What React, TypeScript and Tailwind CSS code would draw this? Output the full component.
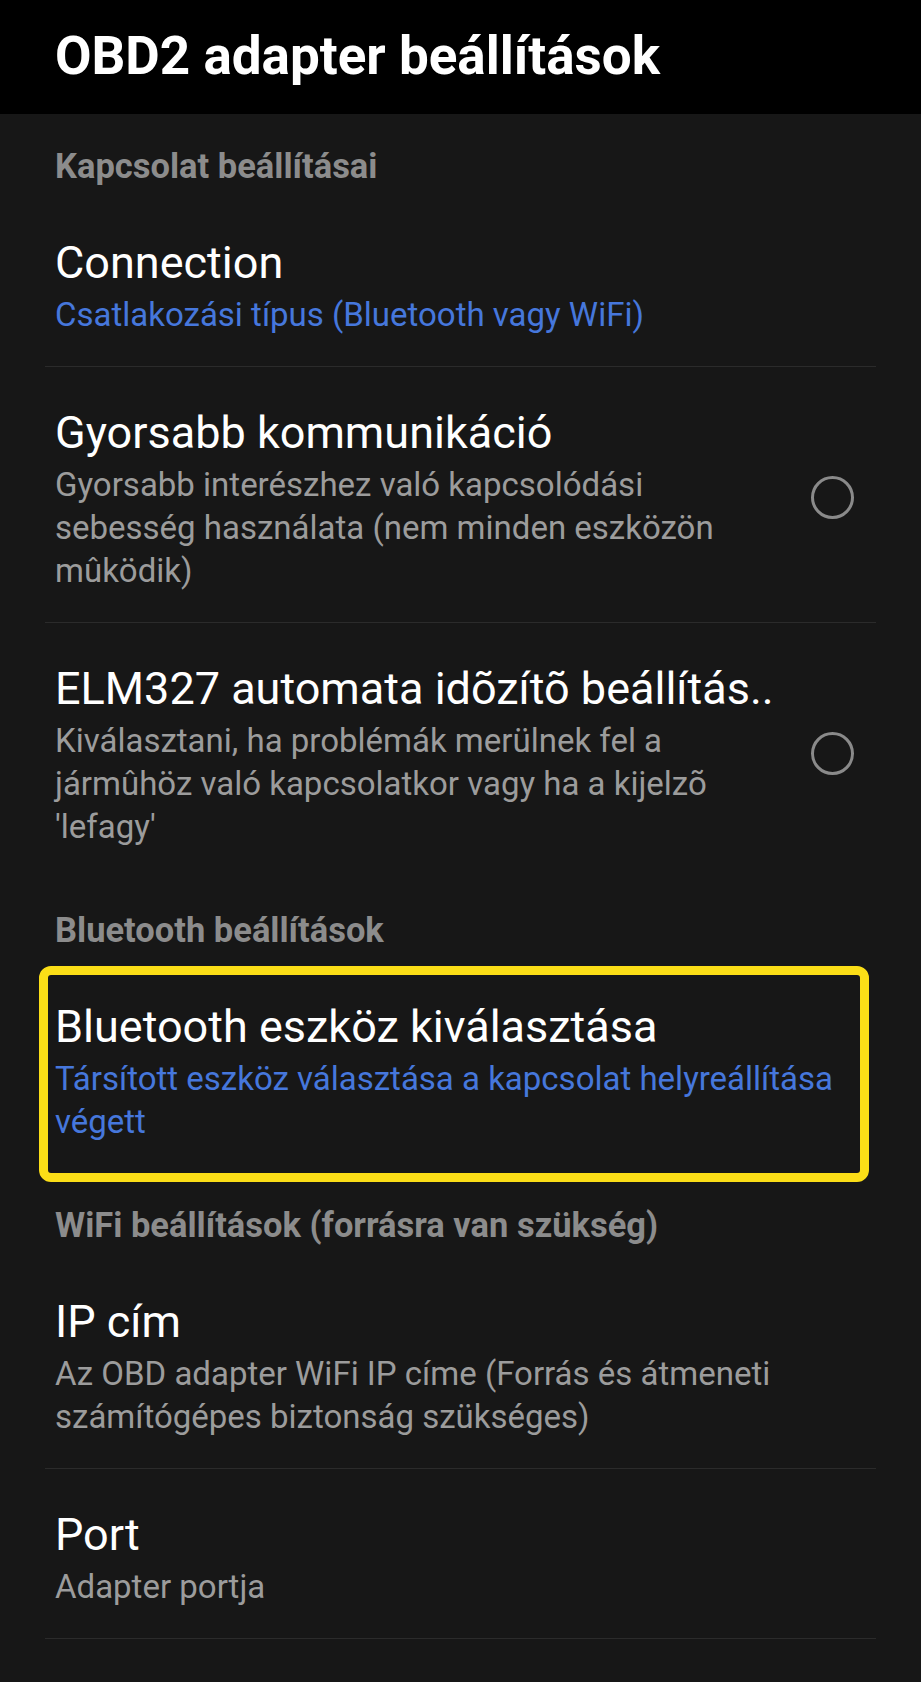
import React from "react";

type Pref = {
  title: string;
  summary: string;
  blue?: boolean;
  radio?: boolean;
  divider?: boolean;
  highlight?: boolean;
};

type Category = { title: string; items: Pref[] };

const categories: Category[] = [
  {
    title: "Kapcsolat beállításai",
    items: [
      { title: "Connection", summary: "Csatlakozási típus (Bluetooth vagy WiFi)", blue: true, divider: true },
      {
        title: "Gyorsabb kommunikáció",
        summary: "Gyorsabb interészhez való kapcsolódási sebesség használata (nem minden eszközön mûködik)",
        radio: true,
        divider: true,
      },
      {
        title: "ELM327 automata idõzítõ beállítás..",
        summary: "Kiválasztani, ha problémák merülnek fel a jármûhöz való kapcsolatkor vagy ha a kijelzõ 'lefagy'",
        radio: true,
      },
    ],
  },
  {
    title: "Bluetooth beállítások",
    items: [
      {
        title: "Bluetooth eszköz kiválasztása",
        summary: "Társított eszköz választása a kapcsolat helyreállítása végett",
        blue: true,
        highlight: true,
      },
    ],
  },
  {
    title: "WiFi beállítások (forrásra van szükség)",
    items: [
      {
        title: "IP cím",
        summary: "Az OBD adapter WiFi IP címe (Forrás és átmeneti számítógépes biztonság szükséges)",
        divider: true,
      },
      { title: "Port", summary: "Adapter portja", divider: true },
    ],
  },
];

function PrefRow({ pref }: { pref: Pref }) {
  return (
    <div className={pref.divider ? "relative border-b border-[#2b2b2b]" : "relative"}>
      {pref.highlight && (
        <div className="pointer-events-none absolute -left-[6px] right-[7px] top-[5px] bottom-[-9px] rounded-[12px] border-[9px] border-[#fbde17]" />
      )}
      <div className="flex items-center px-[10px] pt-[36px] pb-[30px]">
        <div className={pref.radio ? "min-w-0 flex-1 pr-[40px]" : "min-w-0 flex-1"}>
          <div className="whitespace-nowrap text-[45px] leading-[60px] text-white">{pref.title}</div>
          <div className={`text-[33px] leading-[43px] ${pref.blue ? "text-[#4677dc]" : "text-[#9c9c9c]"} ${pref.radio ? "max-w-[660px]" : ""}`}>
            {pref.summary}
          </div>
        </div>
        {pref.radio && (
          <div className="mr-[12px] h-[43px] w-[43px] shrink-0 rounded-full border-[3px] border-[#8a8a8a]" />
        )}
      </div>
    </div>
  );
}

export default function App() {
  return (
    <div className="min-h-[1682px] w-[921px] bg-[#171717]" style={{ fontFamily: "Roboto, 'Noto Sans', sans-serif" }}>
      <header className="flex h-[114px] items-center bg-black px-[55px]">
        <h1 className="text-[53px] font-bold text-white">OBD2 adapter beállítások</h1>
      </header>
      <div className="px-[45px]">
        {categories.map((cat) => (
          <section key={cat.title}>
            <div className="px-[10px] pt-[36px] pb-[15px] text-[34.5px] font-bold leading-[32px] text-[#8c8c8c]">{cat.title}</div>
            {cat.items.map((p) => (
              <PrefRow key={p.title} pref={p} />
            ))}
          </section>
        ))}
      </div>
    </div>
  );
}
